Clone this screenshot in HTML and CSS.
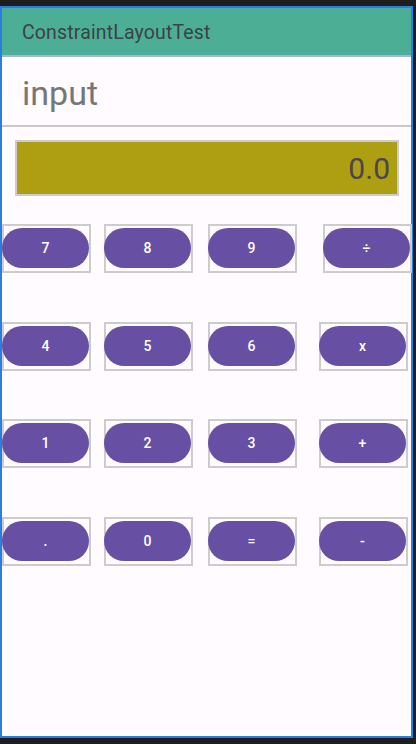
FILE: index.html
```html
<!DOCTYPE html>
<html>
<head>
<meta charset="utf-8">
<link rel="stylesheet" href="styles.css">
</head>
<body>
<div class="window">
  <div class="appbar"><span class="title">ConstraintLayoutTest</span></div>
  <div class="content">
    <div class="input-row"><span class="input-text">input</span></div>
    <div class="display"><span class="display-text">0.0</span></div>
    <div class="keypad">
      <div class="cell"><div class="pill">7</div></div>
      <div class="cell"><div class="pill">8</div></div>
      <div class="cell"><div class="pill">9</div></div>
      <div class="cell cell-shift"><div class="pill">÷</div></div>
      <div class="cell"><div class="pill">4</div></div>
      <div class="cell"><div class="pill">5</div></div>
      <div class="cell"><div class="pill">6</div></div>
      <div class="cell"><div class="pill">x</div></div>
      <div class="cell"><div class="pill">1</div></div>
      <div class="cell"><div class="pill">2</div></div>
      <div class="cell"><div class="pill">3</div></div>
      <div class="cell"><div class="pill">+</div></div>
      <div class="cell"><div class="pill">.</div></div>
      <div class="cell"><div class="pill">0</div></div>
      <div class="cell"><div class="pill">=</div></div>
      <div class="cell"><div class="pill">-</div></div>
    </div>
  </div>
</div>
</body>
</html>
```
FILE: styles.css
```css
html, body {
  margin: 0;
  padding: 0;
  background: #1e1e1e;
  font-family: Roboto, "Noto Sans", sans-serif;
}
body {
  width: 416px;
  height: 744px;
  overflow: hidden;
}
.window {
  box-sizing: border-box;
  margin-top: 6px;
  width: 413px;
  height: 732px;
  border: 2px solid #2a7de1;
  background: #fffbfe;
  display: flex;
  flex-direction: column;
}
.appbar {
  height: 47px;
  background: #4caf95;
  border-bottom: 2px solid #a9b3d6;
  display: flex;
  align-items: center;
  padding-left: 20px;
  flex-shrink: 0;
}
.title {
  font-size: 19.5px;
  letter-spacing: 0.15px;
  color: #3d4148;
  margin-top: 1px;
}
.content {
  display: flex;
  flex-direction: column;
}
.input-row {
  height: 68px;
  border-bottom: 2px solid #c8c8c8;
  display: flex;
  align-items: center;
  padding-left: 20px;
}
.input-text {
  font-size: 34px;
  color: #767676;
  margin-top: 4px;
}
.display {
  box-sizing: border-box;
  margin: 13px 12px 0 13px;
  height: 56px;
  border: 2px solid #cccccc;
  background: #ae9e12;
  display: flex;
  align-items: center;
  justify-content: flex-end;
  padding-right: 7px;
}
.display-text {
  font-size: 30px;
  color: #4a4650;
}
.keypad {
  margin-top: 28px;
  display: grid;
  grid-template-columns: 102px 104px 111px 1fr;
  row-gap: 48.5px;
}
.cell {
  box-sizing: border-box;
  width: 89px;
  height: 49px;
  border: 2px solid #cccccc;
  padding: 2px 0 3px 0;
  display: flex;
}
.cell-shift {
  margin-left: 4px;
}
.pill {
  flex: 1;
  margin-left: -2px;
  margin-right: 0;
  background: #6750a4;
  border-radius: 20px;
  color: #ffffff;
  font-size: 14px;
  font-weight: 500;
  display: flex;
  align-items: center;
  justify-content: center;
}
```
